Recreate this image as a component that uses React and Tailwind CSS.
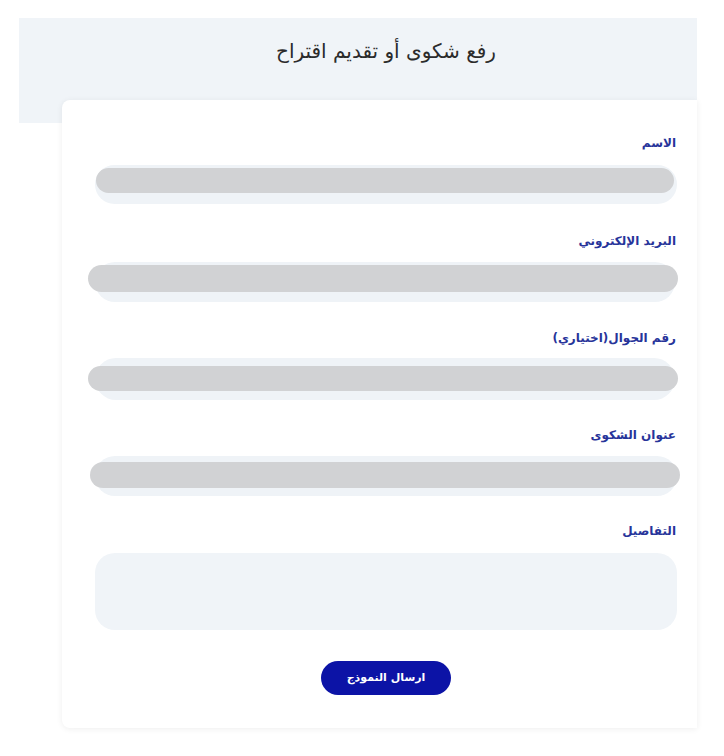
import React from 'react';

const font = { fontFamily: '"DejaVu Sans", "Noto Sans", sans-serif' };

const fields = [
  { label: 'الاسم', labelMt: 'mt-[33px]', wrapMt: 'mt-[12px]', wrap: 'ml-[33px] mr-[20px] h-[39px]', bar: 'mt-[3px] mr-[3px] ml-[1px] h-[25px]' },
  { label: 'البريد الإلكتروني', labelMt: 'mt-[27px]', wrapMt: 'mt-[11px]', wrap: 'ml-[33px] mr-[22px] h-[40px]', bar: 'mt-[3px] -mr-[3px] -ml-[7px] h-[27px]' },
  { label: 'رقم الجوال(اختياري)', labelMt: 'mt-[26px]', wrapMt: 'mt-[10px]', wrap: 'ml-[33px] mr-[22px] h-[42px]', bar: 'mt-[8px] -mr-[3px] -ml-[7px] h-[25px]' },
  { label: 'عنوان الشكوى', labelMt: 'mt-[25px]', wrapMt: 'mt-[11px]', wrap: 'ml-[33px] mr-[20px] h-[40px]', bar: 'mt-[6px] -mr-[3px] -ml-[5px] h-[26px]' },
];

const Label = ({ children, className }) => (
  <div className={`pr-[21px] h-[20px] text-[12px] leading-[20px] font-bold text-[#27349a] ${className}`}>
    {children}
  </div>
);

export default function App() {
  return (
    <div className="min-h-[756px] bg-white" style={font}>
      <div dir="rtl" className="pt-[18px] ml-[19px] w-[678px]">
        <div className="h-[105px] bg-[#f0f4f8] flex justify-center pl-[56px]">
          <h1 className="mt-[21px] text-[20px] leading-[24px] font-normal text-[#2b2b2b]">
            رفع شكوى أو تقديم اقتراح
          </h1>
        </div>
        <div className="-mt-[23px] ml-[43px] h-[628px] bg-white rounded-l-lg shadow-[0_1px_6px_rgba(0,0,0,0.07)] overflow-hidden flex flex-col">
          {fields.map((f) => (
            <React.Fragment key={f.label}>
              <Label className={f.labelMt}>{f.label}</Label>
              <div className={`${f.wrapMt} ${f.wrap} rounded-full bg-[#eff3f7]`}>
                <div className={`${f.bar} rounded-full bg-[#d1d2d4]`} />
              </div>
            </React.Fragment>
          ))}
          <Label className="mt-[25px]">التفاصيل</Label>
          <div className="mt-[12px] ml-[33px] mr-[20px] h-[77px] rounded-[20px] bg-[#f0f4f8]" />
          <div className="mt-[31px] flex justify-center pl-[13px]">
            <button className="w-[130px] h-[34px] rounded-full bg-[#0c13a6] text-white text-[11px] font-bold">
              ارسال النموذج
            </button>
          </div>
        </div>
      </div>
    </div>
  );
}
